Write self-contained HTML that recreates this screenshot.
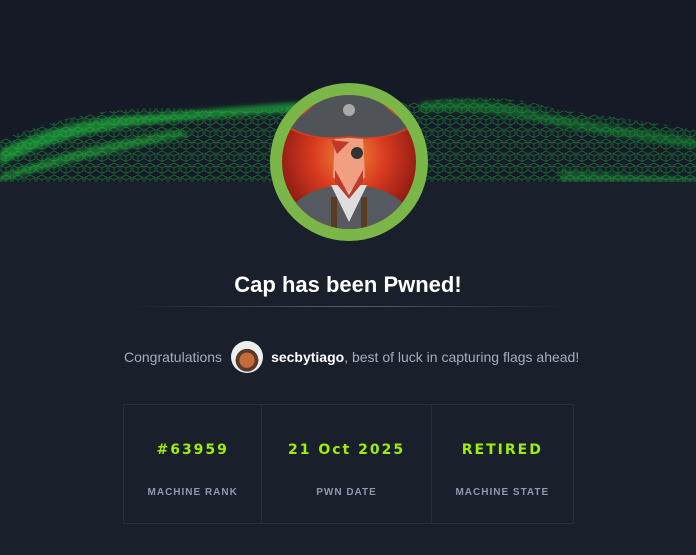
<!DOCTYPE html>
<html><head><meta charset="utf-8"><style>
*{margin:0;padding:0;box-sizing:border-box}
body{width:696px;height:555px;background:#1a1f2c;font-family:"Liberation Sans",sans-serif;position:relative;overflow:hidden}
.top{position:absolute;left:0;top:0;width:696px;height:182px;background:#151a26}
.banner{position:absolute;left:0;top:90px}
.title{position:absolute;top:272px;width:696px;text-align:center;color:#fff;font-weight:bold;font-size:22px}
.line{position:absolute;top:306px;left:128px;width:440px;height:1px;background:linear-gradient(90deg,rgba(80,90,110,0),#556070 50%,rgba(80,90,110,0))}
.congr{position:absolute;top:341px;left:124px;color:#a4acbf;font-size:14px;white-space:nowrap;display:flex;align-items:center}
.av{width:32px;height:32px;border-radius:50%;background:radial-gradient(circle at 50% 60%,#c86b3a 0 30%,#5a3a2a 31% 45%,#eee 46%);margin:0 8px 0 9px}
.congr b{color:#fff}
.tbl{position:absolute;left:123px;top:404px;width:451px;height:120px;border:1px solid #262d3c;display:flex}
.c{border-right:1px solid #262d3c;text-align:center}
.c:last-child{border-right:none}
.v{margin-top:37px;color:#9fef00;font-weight:bold;font-size:14px;letter-spacing:2px;font-family:"DejaVu Sans","Liberation Sans",sans-serif}
.l{margin-top:29px;color:#8f98ad;font-weight:bold;font-size:10px;letter-spacing:1px}
</style></head><body>
<div class="top"></div>
<svg class="banner" width="696" height="92" viewBox="0 0 696 92">
<defs>
<pattern id="p" width="12" height="12" patternUnits="userSpaceOnUse"><path d="M6 1 L11 3.5 L11 9 L6 11.5 L1 9 L1 3.5 Z M1 3.5 L6 6 L11 3.5 M6 6 L6 11.5" fill="none" stroke="#1d7a3a" stroke-width="0.9"/></pattern>
<filter id="b"><feGaussianBlur stdDeviation="2"/></filter>
</defs>
<path d="M0 50 Q100 10 200 20 Q280 25 300 12 L420 12 Q500 0 560 20 Q640 30 696 40 L696 92 L0 92Z" fill="url(#p)" opacity="0.8"/>
<g filter="url(#b)">
<path d="M0 60 Q60 30 140 25 Q220 18 300 12 L300 22 Q220 26 140 35 Q60 45 0 75Z" fill="#20d040" opacity="0.55"/>
<path d="M0 85 Q80 55 180 40 L190 46 Q90 65 0 92Z" fill="#22e040" opacity="0.4"/>
<path d="M420 12 Q480 5 540 22 Q600 35 696 48 L696 58 Q600 45 540 32 Q480 18 420 22Z" fill="#14a034" opacity="0.45"/>
<path d="M560 80 Q630 85 696 88 L696 92 L560 92Z" fill="#1cc03c" opacity="0.35"/>
</g>
</svg>
<svg style="position:absolute;left:269px;top:82px" width="160" height="160" viewBox="0 0 160 160">
<defs><radialGradient id="r" cx="0.5" cy="0.45" r="0.55"><stop offset="0" stop-color="#f08a3a"/><stop offset="0.5" stop-color="#d83a20"/><stop offset="1" stop-color="#8a1a12"/></radialGradient><clipPath id="cc"><circle cx="80" cy="80" r="67"/></clipPath></defs>
<circle cx="80" cy="80" r="79" fill="#7ab648"/>
<circle cx="80" cy="80" r="67" fill="url(#r)"/>
<g clip-path="url(#cc)">
<path d="M15 135 Q30 110 60 105 L100 105 Q130 110 145 135 L145 160 L15 160Z" fill="#555a60"/>
<path d="M62 103 L80 140 L98 103Z" fill="#ddd"/>
<path d="M66 55 L94 55 L96 95 L80 110 L64 95Z" fill="#f0a080"/>
<path d="M66 88 L80 113 L94 88 L94 100 L80 117 L66 100Z" fill="#c0392b"/>
<path d="M14 42 Q40 32 50 15 Q80 2 110 15 Q120 32 146 42 Q120 60 80 55 Q40 60 14 42Z" fill="#505458" stroke="#d84020" stroke-width="1.5"/>
<circle cx="80" cy="28" r="6" fill="#aaa"/>
<path d="M62 58 L80 60 L68 72" fill="#c0392b"/>
<circle cx="88" cy="71" r="6" fill="#333"/>
<rect x="62" y="115" width="6" height="40" fill="#5a3a20"/><rect x="92" y="115" width="6" height="40" fill="#5a3a20"/>
</g>
</svg>
<div class="title">Cap has been Pwned!</div>
<div class="line"></div>
<div class="congr">Congratulations <span class="av"></span><b>secbytiago</b>, best of luck in capturing flags ahead!</div>
<div class="tbl">
<div class="c" style="width:139px"><div class="v">#63959</div><div class="l">MACHINE RANK</div></div>
<div class="c" style="width:170px"><div class="v">21 Oct 2025</div><div class="l">PWN DATE</div></div>
<div class="c" style="width:142px"><div class="v">RETIRED</div><div class="l">MACHINE STATE</div></div>
</div>
</body></html>
